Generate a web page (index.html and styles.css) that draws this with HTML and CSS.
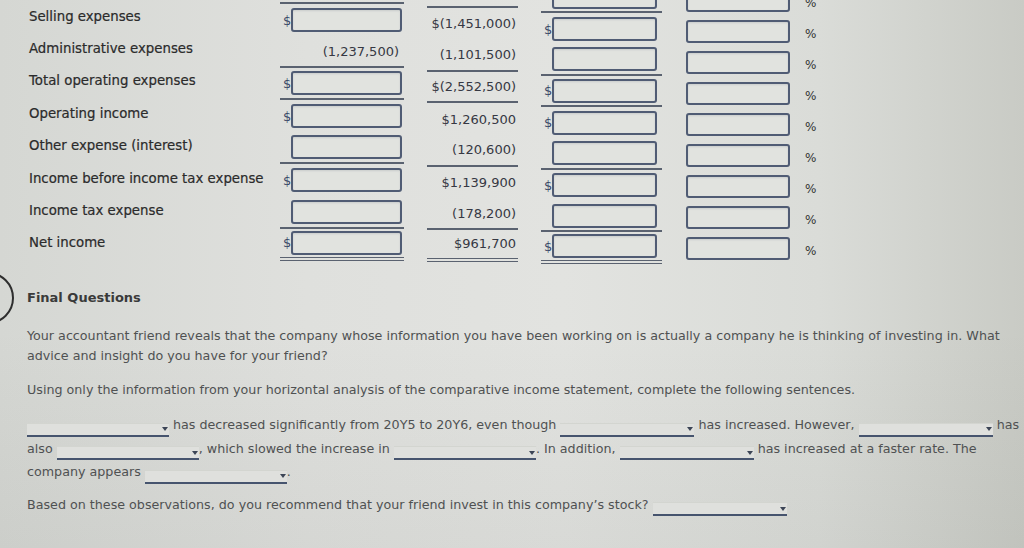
FILE: index.html
```html
<!DOCTYPE html>
<html lang="en">
<head>
<meta charset="utf-8">
<title>Final Questions</title>
<link rel="stylesheet" href="styles.css">
</head>
<body>
<div class="statement">
  <div class="col labels">
    <div class="row">Selling expenses</div>
    <div class="row">Administrative expenses</div>
    <div class="row">Total operating expenses</div>
    <div class="row">Operating income</div>
    <div class="row">Other expense (interest)</div>
    <div class="row">Income before income tax expense</div>
    <div class="row">Income tax expense</div>
    <div class="row">Net income</div>
  </div>

  <div class="col c1">
    <div class="row rule"><span class="cur"></span><span class="box"></span></div>
    <div class="row"><span class="cur">$</span><span class="box"></span></div>
    <div class="row rule"><span class="val">(1,237,500)</span></div>
    <div class="row rule"><span class="cur">$</span><span class="box"></span></div>
    <div class="row"><span class="cur">$</span><span class="box"></span></div>
    <div class="row rule"><span class="cur"></span><span class="box"></span></div>
    <div class="row"><span class="cur">$</span><span class="box"></span></div>
    <div class="row rule"><span class="cur"></span><span class="box"></span></div>
    <div class="row double"><span class="cur">$</span><span class="box"></span></div>
  </div>

  <div class="col c2">
    <div class="row rule"></div>
    <div class="row"><span class="val">$(1,451,000)</span></div>
    <div class="row rule"><span class="val">(1,101,500)</span></div>
    <div class="row rule"><span class="val">$(2,552,500)</span></div>
    <div class="row"><span class="val">$1,260,500</span></div>
    <div class="row rule"><span class="val">(120,600)</span></div>
    <div class="row"><span class="val">$1,139,900</span></div>
    <div class="row rule"><span class="val">(178,200)</span></div>
    <div class="row double"><span class="val">$961,700</span></div>
  </div>

  <div class="col c3">
    <div class="row rule"><span class="cur"></span><span class="box"></span></div>
    <div class="row"><span class="cur">$</span><span class="box"></span></div>
    <div class="row rule"><span class="cur"></span><span class="box"></span></div>
    <div class="row rule"><span class="cur">$</span><span class="box"></span></div>
    <div class="row"><span class="cur">$</span><span class="box"></span></div>
    <div class="row rule"><span class="cur"></span><span class="box"></span></div>
    <div class="row"><span class="cur">$</span><span class="box"></span></div>
    <div class="row rule"><span class="cur"></span><span class="box"></span></div>
    <div class="row double"><span class="cur">$</span><span class="box"></span></div>
  </div>

  <div class="col c4">
    <div class="row"><span class="box"></span><span class="pct">%</span></div>
    <div class="row"><span class="box"></span><span class="pct">%</span></div>
    <div class="row"><span class="box"></span><span class="pct">%</span></div>
    <div class="row"><span class="box"></span><span class="pct">%</span></div>
    <div class="row"><span class="box"></span><span class="pct">%</span></div>
    <div class="row"><span class="box"></span><span class="pct">%</span></div>
    <div class="row"><span class="box"></span><span class="pct">%</span></div>
    <div class="row"><span class="box"></span><span class="pct">%</span></div>
    <div class="row"><span class="box"></span><span class="pct">%</span></div>
  </div>
</div>

<section class="final">
  <div class="step"></div>
  <div class="final-body">
    <h2 class="final-title">Final Questions</h2>
    <p class="intro">Your accountant friend reveals that the company whose information you have been working on is actually a company he is thinking of investing in. What advice and insight do you have for your friend?</p>
    <p class="intro2">Using only the information from your horizontal analysis of the comparative income statement, complete the following sentences.</p>
    <p class="sentences"><span class="dd"></span><span class="seg"> has decreased significantly from 20Y5 to 20Y6, even though </span><span class="dd dd-s"></span><span class="seg"> has increased. However, </span><span class="dd dd-s"></span> <span class="seg">has</span> <span class="seg">also</span> <span class="dd"></span><span class="seg">, which slowed the increase in </span><span class="dd"></span><span class="seg">. In addition, </span><span class="dd dd-s"></span><span class="seg"> has increased at a faster rate. The</span> <span class="seg">company appears</span> <span class="dd"></span><span class="seg">.</span></p>
    <p class="question"><span class="seg">Based on these observations, do you recommend that your friend invest in this company’s stock?</span> <span class="dd dd-s"></span></p>
  </div>
</section>
</body>
</html>
```

FILE: styles.css
```css
* { box-sizing: border-box; }

html, body {
  margin: 0;
  height: 100%;
}

body {
  width: 1024px;
  height: 548px;
  overflow: hidden;
  font-family: "DejaVu Sans", Verdana, sans-serif;
  color: #3a3a3a;
  background:
    linear-gradient(180deg, rgba(0,0,0,0) 60%, rgba(60,64,58,0.06) 100%),
    linear-gradient(90deg, #d5d7d3 0%, #dfe0dd 30%, #e2e3e0 55%, #dadcd8 80%, #c9cbc5 100%);
}

/* ---------- statement ---------- */
.statement {
  display: flex;
  align-items: flex-start;
  height: 265px;
  padding-left: 29px;
}

.col {
  display: flex;
  flex-direction: column;
}

.row {
  display: flex;
  align-items: center;
  flex: none;
}

.labels {
  width: 251px;
  font-size: 13.3px;
  color: #2b2b2b;
  -webkit-text-stroke: 0.2px #2b2b2b;
}
.labels .row { height: 32.4px; }

.c1 { width: 124px; margin-top: -28.15px; }
.c1 .row { height: 32.1px; }

.c2 { width: 91px; margin-left: 23px; margin-top: -23.55px; }
.c2 .row { height: 31.7px; justify-content: flex-end; }

.c3 { width: 121px; margin-left: 23px; margin-top: -17.95px; }
.c3 .row { height: 31.3px; }

.c4 { margin-left: 24px; margin-top: -15.5px; }
.c4 .row { height: 31px; }

.rule { border-bottom: 2px solid #5a6270; }
.double { border-bottom: 4px double #5a6270; }

.cur {
  width: 11px;
  padding-left: 3px;
  font-size: 13px;
  color: #3b4a68;
}

.box {
  display: block;
  height: 24px;
  border: 2px solid #505c74;
  border-radius: 3px;
  background: #e1e3df;
  box-shadow: inset 0 1px 2px rgba(40, 50, 70, 0.12);
}

.c1 .box { width: 111px; }
.c3 .box { width: 105px; }
.c4 .box { width: 104px; height: 23px; }

.val {
  font-size: 13px;
  color: #363843;
}
.c1 .val { margin-left: auto; padding-right: 5px; }
.c2 .val { padding-right: 2px; }

.pct {
  margin-left: 15px;
  padding-top: 5px;
  font-size: 12px;
  color: #333;
}

/* ---------- final questions ---------- */
.final {
  display: flex;
  align-items: flex-start;
}

.step {
  flex: none;
  width: 52px;
  height: 52px;
  margin: 7px 13px 0 -38px;
  border: 2px solid #2e2e2e;
  border-radius: 50%;
}

.final-body {
  flex: 1;
  padding-top: 24px;
  font-size: 12.7px;
  color: #4f5152;
}

.final-title {
  margin: 0;
  font-size: 13px;
  line-height: 18px;
  font-weight: bold;
  color: #3a3a3a;
}

.intro {
  margin: 19px 0 0;
  line-height: 20px;
}

.intro2 {
  margin: 14px 0 0;
  line-height: 20px;
}

.sentences {
  margin: 13px 0 0;
  line-height: 23px;
}

.question {
  margin: 11px 0 0;
  line-height: 20px;
}

.dd {
  display: inline-flex;
  align-items: center;
  justify-content: flex-end;
  width: 142px;
  height: 14px;
  vertical-align: -2px;
  border-top: 1px solid #d3d5d0;
  border-bottom: 2px solid #46546e;
  background: #dfe0dd;
}
.dd-s { width: 134px; }

.dd::after {
  content: "";
  width: 0;
  height: 0;
  margin-right: 1px;
  border-left: 3.5px solid transparent;
  border-right: 3.5px solid transparent;
  border-top: 4px solid #3c4556;
}
```
